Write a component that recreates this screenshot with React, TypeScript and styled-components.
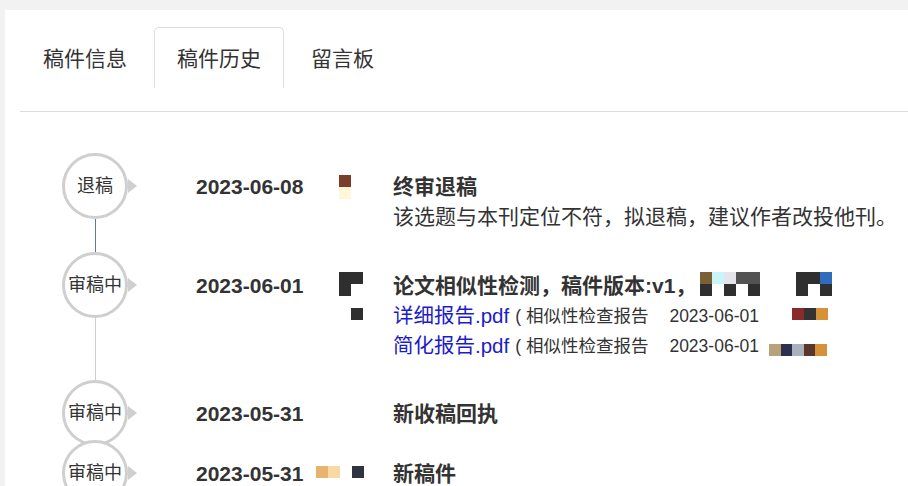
import styled, { createGlobalStyle } from "styled-components";

const GlobalStyle = createGlobalStyle`
  html, body {
    margin: 0;
    padding: 0;
    background: #f2f2f2;
    font-family: "Liberation Sans", "Noto Sans CJK SC", sans-serif;
    color: #333;
  }
`;

const Page = styled.div`
  padding: 10px 0 0 5px;
  height: 486px;
  box-sizing: border-box;
  overflow: hidden;
`;

const Panel = styled.div`
  background: #fff;
  min-height: 476px;
  padding: 17px 0 0 15px;
  box-sizing: border-box;
`;

const Tabs = styled.div`
  display: flex;
  height: 61px;
`;

const Tab = styled.div<{ $active?: boolean }>`
  display: flex;
  align-items: center;
  padding: 0 22px;
  margin-right: 4px;
  font-size: 21px;
  color: #333;
  border: 1px solid ${(p) => (p.$active ? "#ddd" : "transparent")};
  border-bottom: none;
  border-radius: 5px 5px 0 0;
  line-height: 1;
`;

const Divider = styled.div`
  margin-top: 23px;
  border-top: 1px solid #dcdcdc;
`;

const Timeline = styled.div`
  padding: 41px 0 0 42px;
`;

const Item = styled.div<{ $pull?: number }>`
  display: flex;
  align-items: flex-start;
  margin-bottom: ${(p) => (p.$pull ? -p.$pull : 0)}px;
`;

const Marker = styled.div`
  width: 66px;
  flex: none;
  display: flex;
  flex-direction: column;
  align-items: center;
`;

const Circle = styled.div`
  position: relative;
  width: 66px;
  height: 66px;
  box-sizing: border-box;
  border: 3px solid #cfcfcf;
  border-radius: 50%;
  background: #fff;
  display: flex;
  align-items: center;
  justify-content: center;
  font-size: 18px;
  color: #333;
  line-height: 1;
`;

const Arrow = styled.span`
  position: absolute;
  right: -12px;
  top: 50%;
  margin-top: -7px;
  border-style: solid;
  border-width: 7px 0 7px 9px;
  border-color: transparent transparent transparent #cfcfcf;
`;

const Connector = styled.div<{ $len: number; $tone: string }>`
  width: 1px;
  height: ${(p) => p.$len}px;
  background: ${(p) => p.$tone};
`;

const DateCell = styled.div`
  width: 197px;
  margin-left: 68px;
  flex: none;
  display: flex;
  align-items: flex-start;
  padding-top: 19px;
`;

const DateText = styled.span`
  font-size: 21px;
  font-weight: bold;
  line-height: 30px;
  color: #333;
`;

const Body = styled.div`
  padding-top: 19px;
  flex: 1;
  min-width: 0;
`;

const Line = styled.div`
  display: flex;
  align-items: flex-start;
  line-height: 30px;
  white-space: nowrap;
`;

const Title = styled.span`
  font-size: 21px;
  font-weight: bold;
  color: #333;
`;

const Desc = styled.span`
  font-size: 21px;
  color: #333;
`;

const FileLink = styled.a`
  font-size: 20.5px;
  color: #1c1cc8;
  text-decoration: none;
`;

const FileNote = styled.span`
  font-size: 17.5px;
  color: #333;
  margin-left: 6px;
`;

const FileDate = styled.span`
  font-size: 17.5px;
  color: #333;
  margin-left: 21px;
`;

const MosaicGrid = styled.div<{ $cols: number; $cell: number; $left: number; $top: number }>`
  display: inline-grid;
  flex: none;
  grid-template-columns: repeat(${(p) => p.$cols}, ${(p) => p.$cell}px);
  grid-auto-rows: ${(p) => p.$cell}px;
  margin-left: ${(p) => p.$left}px;
  margin-top: ${(p) => p.$top}px;
`;

const Cell = styled.span<{ $c: string }>`
  background: ${(p) => p.$c || "transparent"};
`;

type MosaicProps = { rows: string[][]; cell?: number; left?: number; top?: number };

// blurred names in the screenshot, kept as coloured blocks
const Mosaic = ({ rows, cell = 12, left = 0, top = 0 }: MosaicProps) => (
  <MosaicGrid $cols={rows[0].length} $cell={cell} $left={left} $top={top}>
    {rows.flatMap((r, i) => r.map((c, j) => <Cell key={`${i}-${j}`} $c={c} />))}
  </MosaicGrid>
);

const D = "#2f2f2f";

export default function App() {
  return (
    <>
      <GlobalStyle />
      <Page>
        <Panel>
          <Tabs>
            <Tab>稿件信息</Tab>
            <Tab $active>稿件历史</Tab>
            <Tab>留言板</Tab>
          </Tabs>
          <Divider />
          <Timeline>
            <Item>
              <Marker>
                <Circle>
                  退稿
                  <Arrow />
                </Circle>
                <Connector $len={33} $tone="#5d7b92" />
              </Marker>
              <DateCell>
                <DateText>2023-06-08</DateText>
                <Mosaic left={36} top={3} rows={[["#7a3f2b"], ["#fff7d8"]]} />
              </DateCell>
              <Body>
                <Line>
                  <Title>终审退稿</Title>
                </Line>
                <Line>
                  <Desc>该选题与本刊定位不符，拟退稿，建议作者改投他刊。</Desc>
                </Line>
              </Body>
            </Item>

            <Item>
              <Marker>
                <Circle>
                  审稿中
                  <Arrow />
                </Circle>
                <Connector $len={62} $tone="#cfcfcf" />
              </Marker>
              <DateCell>
                <DateText>2023-06-01</DateText>
                <Mosaic
                  left={36}
                  top={1}
                  rows={[
                    [D, D],
                    [D, ""],
                    ["", ""],
                    ["", D],
                  ]}
                />
              </DateCell>
              <Body>
                <Line>
                  <Title>论文相似性检测，稿件版本:v1，</Title>
                  <Mosaic
                    left={4}
                    top={1}
                    rows={[
                      ["#7a6034", "#c9f5f8", "#e5e5e9", "#535353", "#535353"],
                      [D, "", D, "", D],
                    ]}
                  />
                  <Mosaic
                    left={36}
                    top={1}
                    rows={[
                      [D, D, "#2f6cbd"],
                      [D, "", D],
                    ]}
                  />
                </Line>
                <Line>
                  <FileLink href="#">详细报告.pdf</FileLink>
                  <FileNote>( 相似性检查报告</FileNote>
                  <FileDate>2023-06-01</FileDate>
                  <Mosaic left={33} top={7} rows={[["#8a2a2b", "#333333", "#d6923a"]]} />
                </Line>
                <Line>
                  <FileLink href="#">简化报告.pdf</FileLink>
                  <FileNote>( 相似性检查报告</FileNote>
                  <FileDate>2023-06-01</FileDate>
                  <Mosaic
                    left={10}
                    top={13}
                    cell={11.6}
                    rows={[["#b9a27b", "#2d2f4f", "#a9b1bd", "#5a3529", "#d6923a"]]}
                  />
                </Line>
              </Body>
            </Item>

            <Item $pull={6}>
              <Marker>
                <Circle>
                  审稿中
                  <Arrow />
                </Circle>
              </Marker>
              <DateCell>
                <DateText>2023-05-31</DateText>
              </DateCell>
              <Body>
                <Line>
                  <Title>新收稿回执</Title>
                </Line>
              </Body>
            </Item>

            <Item>
              <Marker>
                <Circle>
                  审稿中
                  <Arrow />
                </Circle>
              </Marker>
              <DateCell>
                <DateText>2023-05-31</DateText>
                <Mosaic left={13} top={7} rows={[["#e8b36f", "#f8d9a3", "", "#2e3440"]]} />
              </DateCell>
              <Body>
                <Line>
                  <Title>新稿件</Title>
                </Line>
              </Body>
            </Item>
          </Timeline>
        </Panel>
      </Page>
    </>
  );
}
